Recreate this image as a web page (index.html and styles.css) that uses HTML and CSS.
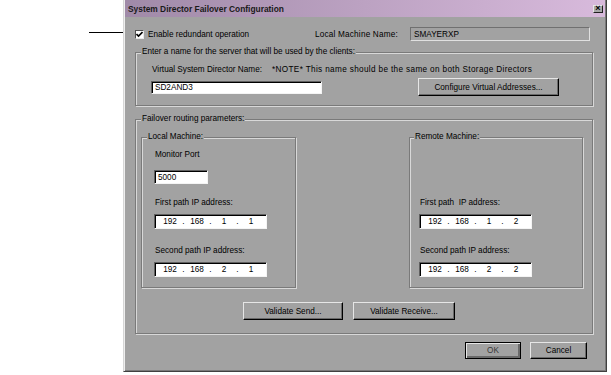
FILE: index.html
```html
<!DOCTYPE html>
<html lang="en">
<head>
  <meta charset="UTF-8" />
  <title>System Director Failover Configuration</title>
  <link rel="stylesheet" href="styles.css">
</head>
<body>

  <div class="callout"><div class="callout-line"></div></div>

  <div class="dialog">
    <div class="titlebar">
      <span class="title">System Director Failover Configuration</span>
      <span class="close">&#215;</span>
    </div>

    <div class="content">
      <div class="top-row">
        <div class="enable">
          <span class="checkbox">
            <svg width="7" height="7" viewBox="0 0 7 7"><polyline points="0.5,3 2.5,5 6.5,1" fill="none" stroke="#000" stroke-width="1.6"/></svg>
          </span>
          <span>Enable redundant operation</span>
        </div>
        <span class="machine-label">Local Machine Name:</span>
        <div class="field readonly machine-field">SMAYERXP</div>
      </div>

      <div class="group name-group">
        <div class="legend">Enter a name for the server that will be used by the clients:</div>
        <div class="name-labels">
          <span class="vsd-label">Virtual System Director Name:</span>
          <span class="note">*NOTE* This name should be the same on both Storage Directors</span>
        </div>
        <div class="name-inputs">
          <div class="field vsd-field">SD2AND3</div>
          <div class="button configure">Configure Virtual Addresses...</div>
        </div>
      </div>

      <div class="group failover-group">
        <div class="legend">Failover routing parameters:</div>
        <div class="machines">
          <div class="group machine local">
            <div class="legend">Local Machine:</div>
            <div class="port-label">Monitor Port</div>
            <div class="field port-field">5000</div>
            <div class="ip-label first">First path IP address:</div>
            <div class="field ip"><span>192</span><i>.</i><span>168</span><i>.</i><span>1</span><i>.</i><span>1</span></div>
            <div class="ip-label second">Second path IP address:</div>
            <div class="field ip"><span>192</span><i>.</i><span>168</span><i>.</i><span>2</span><i>.</i><span>1</span></div>
          </div>
          <div class="group machine remote">
            <div class="legend">Remote Machine:</div>
            <div class="port-space"></div>
            <div class="ip-label first">First path &nbsp;IP address:</div>
            <div class="field ip"><span>192</span><i>.</i><span>168</span><i>.</i><span>1</span><i>.</i><span>2</span></div>
            <div class="ip-label second">Second path IP address:</div>
            <div class="field ip"><span>192</span><i>.</i><span>168</span><i>.</i><span>2</span><i>.</i><span>2</span></div>
          </div>
        </div>
        <div class="validate">
          <div class="button send">Validate Send...</div>
          <div class="button receive">Validate Receive...</div>
        </div>
      </div>

      <div class="dialog-buttons">
        <div class="button ok">OK</div>
        <div class="button cancel">Cancel</div>
      </div>
    </div>
  </div>

</body>
</html>
```

FILE: styles.css
```css
body {
  margin: 0;
  background: #fff;
  font-family: "Liberation Sans", Arial, sans-serif;
  font-size: 8.2px;
  color: #000;
  display: flex;
}
.callout {
  width: 123px;
  flex: none;
}
.callout-line {
  margin: 32px 0 0 89px;
  height: 1px;
  background: #000;
}
.dialog {
  width: 484px;
  height: 372px;
  box-sizing: border-box;
  background: #a2a2a2;
  border-left: 1px solid #d6d6d6;
  border-right: 1px solid #404040;
  border-bottom: 1px solid #404040;
  box-shadow: inset 1px 0 0 #eee, inset -1px -1px 0 #7a7a7a;
}
.titlebar {
  height: 17px;
  margin: 0 1px;
  background: linear-gradient(to right, #a08aa8, #d8badc);
  display: flex;
  align-items: center;
  justify-content: space-between;
  padding: 0 2px 0 3px;
}
.title {
  font-weight: bold;
  font-size: 8.4px;
  color: #1a1a1a;
}
.close {
  width: 10px;
  height: 8px;
  box-sizing: border-box;
  background: #a8a8a8;
  border: 1px solid;
  border-color: #e8e8e8 #202020 #202020 #e8e8e8;
  font-size: 9px;
  line-height: 5px;
  text-align: center;
  font-weight: bold;
}
.content {
  padding: 0 13px 0 11px;
}
.top-row {
  margin-top: 10px;
  height: 14px;
  display: flex;
  align-items: center;
}
.enable {
  width: 180px;
  display: flex;
  align-items: center;
  gap: 4px;
}
.checkbox {
  width: 9px;
  height: 9px;
  box-sizing: border-box;
  background: #fff;
  border: 1px solid;
  border-color: #505050 #e8e8e8 #e8e8e8 #505050;
  display: flex;
  align-items: center;
  justify-content: center;
}
.machine-label {
  width: 95px;
  letter-spacing: 0.2px;
}
.field {
  box-sizing: border-box;
  background: #fff;
  border: 1px solid;
  border-color: #606060 #f4f4f4 #f4f4f4 #606060;
  box-shadow: inset 1px 1px 0 #000;
  padding-left: 3px;
  display: flex;
  align-items: center;
}
.field.readonly {
  background: #a2a2a2;
  border-color: #707070 #e0e0e0 #e0e0e0 #707070;
  box-shadow: none;
}
.machine-field {
  width: 180px;
  height: 14px;
}
.group {
  box-sizing: border-box;
  border: 1px solid #7a7a7a;
  box-shadow: inset 1px 1px 0 #d8d8d8, 1px 1px 0 #d8d8d8;
}
.legend {
  width: fit-content;
  height: 10px;
  line-height: 10px;
  margin: -6px 0 0 5px;
  padding: 0 1px;
  background: #a2a2a2;
}
.name-group {
  margin-top: 11px;
  height: 54px;
}
.name-labels {
  margin-top: 8px;
  height: 10px;
  line-height: 10px;
  display: flex;
  padding-left: 16px;
}
.vsd-label {
  width: 120px;
  flex: none;
}
.note {
  letter-spacing: 0.35px;
}
.name-inputs {
  margin-top: 3px;
  display: flex;
  align-items: center;
  padding-left: 15px;
}
.vsd-field {
  width: 171px;
  height: 13px;
  margin-top: 1px;
}
.button {
  box-sizing: border-box;
  background: #a2a2a2;
  border: 1px solid;
  border-color: #e6e6e6 #000 #000 #e6e6e6;
  box-shadow: inset -1px -1px 0 #6a6a6a;
  display: flex;
  align-items: center;
  justify-content: center;
}
.configure {
  width: 141px;
  height: 18px;
  margin-left: 96px;
}
.failover-group {
  margin-top: 13px;
  height: 215px;
}
.machines {
  margin-top: 13px;
  display: flex;
  padding-left: 5px;
}
.machine {
  height: 151px;
}
.local {
  width: 155px;
  padding-left: 12px;
}
.remote {
  width: 174px;
  margin-left: 113px;
  padding-left: 9px;
}
.local .legend {
  margin-left: -7px;
}
.remote .legend {
  margin-left: -5px;
}
.port-label {
  margin-top: 8px;
  height: 10px;
  line-height: 10px;
  padding-left: 1px;
}
.port-field {
  width: 54px;
  height: 14px;
  margin-top: 10px;
}
.port-space {
  height: 42px;
}
.ip-label {
  height: 10px;
  line-height: 10px;
  padding-left: 1px;
}
.ip-label.first {
  margin-top: 14px;
}
.ip-label.second {
  margin-top: 17px;
}
.ip {
  width: 113px;
  height: 15px;
  margin-top: 6px;
  padding-left: 4px;
}
.ip span {
  width: 22px;
  text-align: center;
}
.ip i {
  font-style: normal;
  width: 5px;
  text-align: center;
}
.validate {
  margin-top: 14px;
  padding-left: 107px;
  display: flex;
  gap: 10px;
}
.send {
  width: 100px;
  height: 18px;
}
.receive {
  width: 102px;
  height: 18px;
}
.dialog-buttons {
  margin-top: 8px;
  display: flex;
  justify-content: flex-end;
  gap: 9px;
  padding-right: 6px;
}
.ok {
  width: 56px;
  height: 17px;
  color: #383838;
  border: 1px solid #000;
  box-shadow: inset 1px 1px 0 #e6e6e6, inset -2px -2px 0 #6a6a6a;
}
.cancel {
  width: 57px;
  height: 17px;
}
```
